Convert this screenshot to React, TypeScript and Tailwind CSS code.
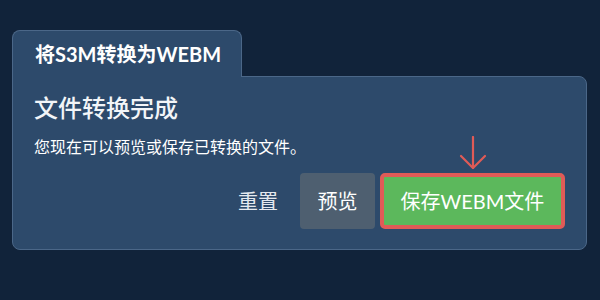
import { useState } from "react";

const FONT = "font-['Lato','Noto_Sans_CJK_SC',sans-serif]";

function DownArrow() {
  return (
    <svg
      className="pointer-events-none absolute left-1/2 top-[-37px] -translate-x-1/2"
      width="28"
      height="34"
      viewBox="0 0 28 34"
      fill="none"
      stroke="#e05b57"
      strokeWidth="2.2"
      strokeLinecap="round"
      strokeLinejoin="round"
    >
      <path d="M14 1v31" />
      <path d="M2 20l12 12 12-12" />
    </svg>
  );
}

export default function App() {
  const [saved, setSaved] = useState(false);

  return (
    <div className={`min-h-[300px] w-[600px] bg-[#11233a] pl-3 pt-[30px] ${FONT}`}>
      <div className="w-[575px]">
        <div className="relative z-10 -mb-px flex h-[47px] w-[230px] items-center rounded-t-lg border border-b-0 border-[#4b6788] bg-[#2d4a6b] pl-[22px]">
          <h2 className="text-[20px] font-bold text-white">将S3M转换为WEBM</h2>
        </div>

        <div className="rounded-b-lg rounded-tr-lg border border-[#4b6788] bg-[#2d4a6b] px-[21px] pb-[20px] pt-[15px]">
          <h3 className="text-[24px] leading-[32px] font-medium text-[#f2f5f8]">文件转换完成</h3>
          <p className="mt-[11px] text-[16px] leading-[24px] text-white">您现在可以预览或保存已转换的文件。</p>

          <div className="mt-[14px] flex items-center justify-end gap-[5px]">
            <button className="mr-[5px] h-[56px] px-3 text-[20px] text-[#e4e9ef]">重置</button>
            <button className="h-[56px] w-[75px] rounded bg-[#4e5f70] text-[20px] text-white">预览</button>
            <div className="relative">
              <DownArrow />
              <button
                onClick={() => setSaved(true)}
                className="h-[56px] w-[185px] rounded-[5px] border-[4px] border-[#e05b57] bg-[#5cb85c] text-[20px] text-white"
              >
                {saved ? "已保存" : "保存WEBM文件"}
              </button>
            </div>
          </div>
        </div>
      </div>
    </div>
  );
}
